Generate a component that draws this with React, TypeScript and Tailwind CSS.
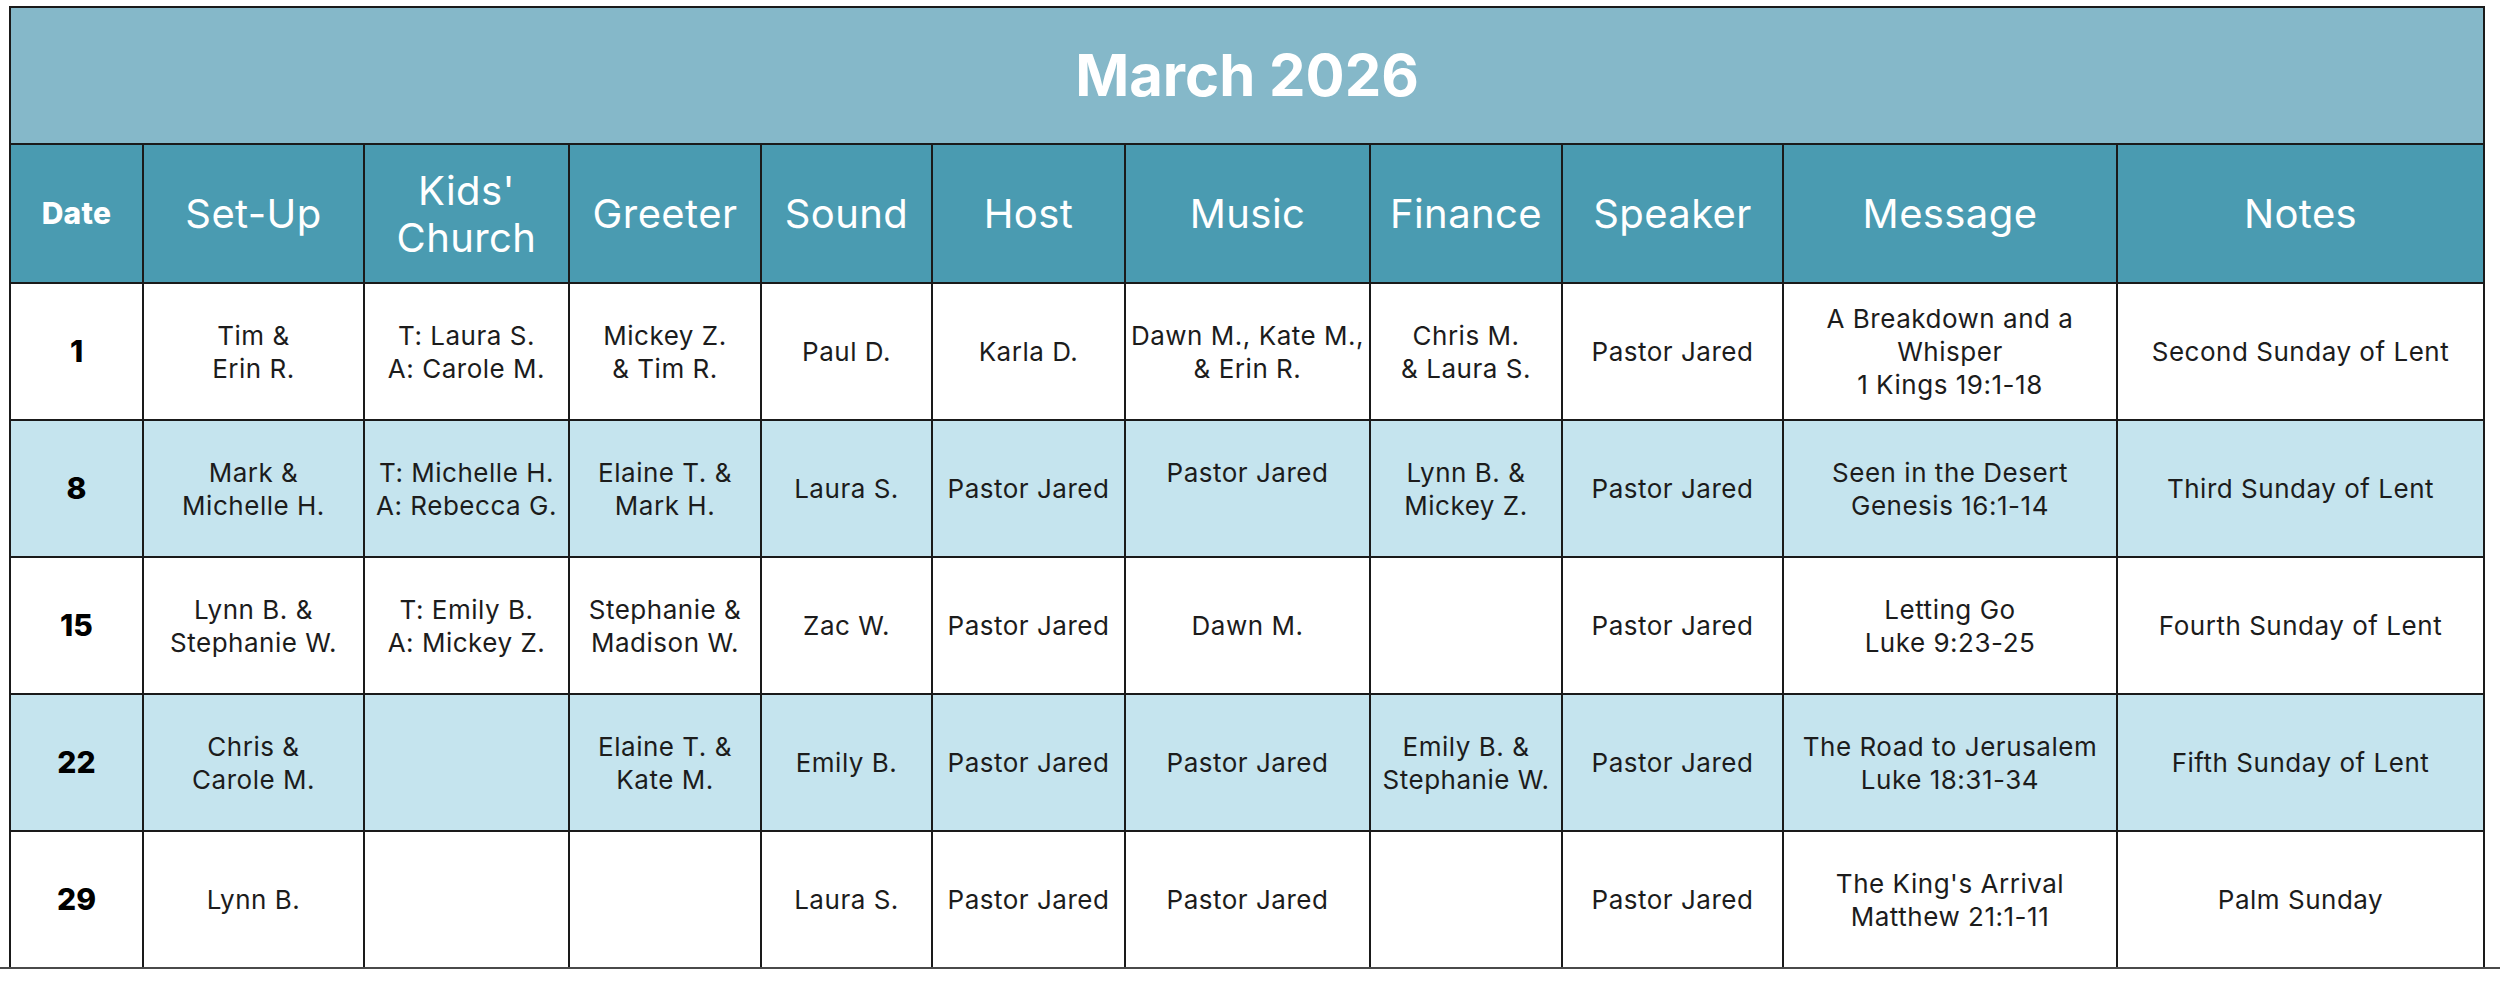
const headers = ['Set-Up', "Kids'\nChurch", 'Greeter', 'Sound', 'Host', 'Music', 'Finance', 'Speaker', 'Message', 'Notes']

const rows = [
  ['1', 'Tim &\nErin R.', 'T: Laura S.\nA: Carole M.', 'Mickey Z.\n& Tim R.', 'Paul D.', 'Karla D.', 'Dawn M., Kate M.,\n& Erin R.', 'Chris M.\n& Laura S.', 'Pastor Jared', 'A Breakdown and a\nWhisper\n1 Kings 19:1-18', 'Second Sunday of Lent'],
  ['8', 'Mark &\nMichelle H.', 'T: Michelle H.\nA: Rebecca G.', 'Elaine T. &\nMark H.', 'Laura S.', 'Pastor Jared', 'Pastor Jared\n\u00a0', 'Lynn B. &\nMickey Z.', 'Pastor Jared', 'Seen in the Desert\nGenesis 16:1-14', 'Third Sunday of Lent'],
  ['15', 'Lynn B. &\nStephanie W.', 'T: Emily B.\nA: Mickey Z.', 'Stephanie &\nMadison W.', 'Zac W.', 'Pastor Jared', 'Dawn M.', '', 'Pastor Jared', 'Letting Go\nLuke 9:23-25', 'Fourth Sunday of Lent'],
  ['22', 'Chris &\nCarole M.', '', 'Elaine T. &\nKate M.', 'Emily B.', 'Pastor Jared', 'Pastor Jared', 'Emily B. &\nStephanie W.', 'Pastor Jared', 'The Road to Jerusalem\nLuke 18:31-34', 'Fifth Sunday of Lent'],
  ['29', 'Lynn B.', '', '', 'Laura S.', 'Pastor Jared', 'Pastor Jared', '', 'Pastor Jared', "The King's Arrival\nMatthew 21:1-11", 'Palm Sunday'],
]

export default function App() {
  return (
    <div className="w-[2500px] h-[983px] bg-white font-['Inter',sans-serif]">
      <div className="w-full pl-[9px] pt-[6px] border-b-2 border-[#4a4a4a]">
        <div className="w-fit grid grid-cols-[131px_219px_203px_190px_169px_191px_243px_190px_219px_332px_365px] gap-[2px] bg-[#1a1a1a] border-x-2 border-t-2 border-[#1a1a1a]">
          <div className="col-span-11 h-[135px] bg-[#85b8c9] flex items-center justify-center text-white text-[58px] font-bold">
            March 2026
          </div>

          <div className="h-[137px] bg-[#4a9bb1] flex items-center justify-center text-white text-[30px] font-extrabold tracking-[0.01em]">
            Date
          </div>
          {headers.map((h) => (
            <div
              key={h}
              className="h-[137px] bg-[#4a9bb1] flex items-center justify-center text-center text-white text-[40px] leading-[47px] whitespace-pre tracking-[0.01em]"
            >
              {h}
            </div>
          ))}

          {rows.map((row, i) =>
            row.map((cell, j) => (
              <div
                key={`${i}-${j}`}
                className={`h-[135px] flex items-center justify-center text-center whitespace-pre ${
                  i % 2 === 1 ? 'bg-[#c5e4ee]' : 'bg-white'
                } ${
                  j === 0
                    ? 'text-[30px] font-extrabold text-black'
                    : 'text-[26px] leading-[33px] text-[#1c1c1c] tracking-[0.02em]'
                }`}
              >
                {cell}
              </div>
            ))
          )}
        </div>
      </div>
    </div>
  )
}
